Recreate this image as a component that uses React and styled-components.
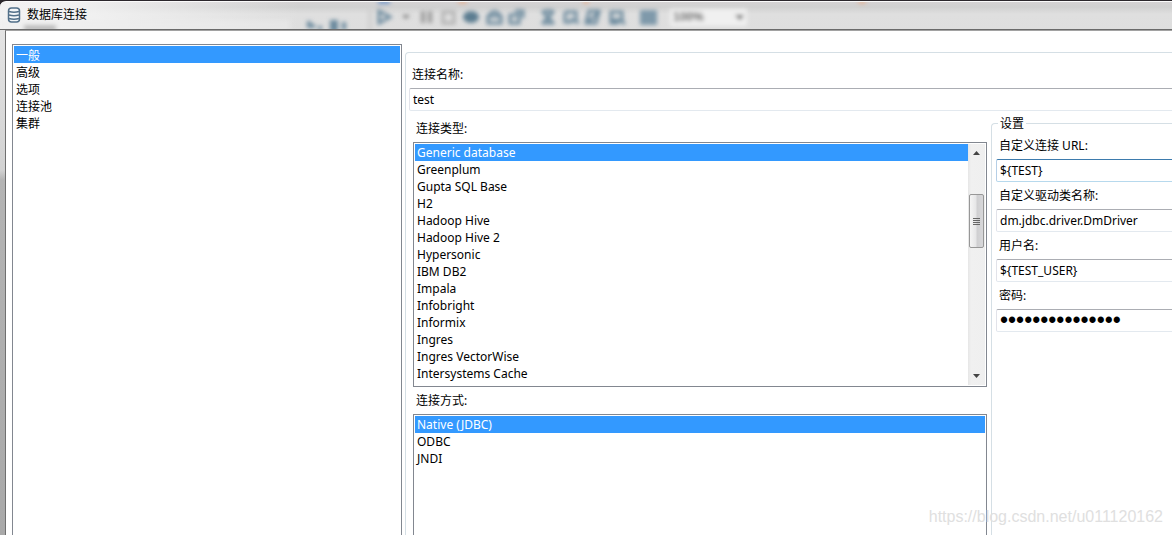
import React from "react";
import styled, { createGlobalStyle } from "styled-components";

const GlobalStyle = createGlobalStyle`
  *, *::before, *::after { box-sizing: border-box; }
  body { margin: 0; background: #fff; overflow: hidden; }
  body, select, option, input {
    font-family: "Noto Sans", "Noto Sans CJK SC", sans-serif;
    font-size: 12px;
    line-height: 17px;
    color: #000;
  }
`;

const Window = styled.div`
  display: flex;
  flex-direction: column;
  height: 100vh;
  overflow: hidden;
  position: relative;
  background: #2b272c;
`;

const TitleBar = styled.header`
  position: relative;
  flex: none;
  height: 29px;
  margin-top: 1px;
  border-top: 1px solid #fafafa;
  border-bottom: 1px solid #6a6a6a;
  border-radius: 6px 0 0 0;
  overflow: hidden;
  display: flex;
  align-items: center;
  gap: 6px;
  padding: 0 7px 2px;
  background:
    linear-gradient(90deg, rgba(245, 245, 245, 0.9) 60px, rgba(240, 240, 240, 0) 300px),
    linear-gradient(#d4d2d3, #d0d0d0 5px, #dfdfdf 12px, #dedede);
`;

const Title = styled.h1`
  position: relative;
  margin: 0;
  font-size: 12px;
  font-weight: 400;
  line-height: 17px;
`;

const DatabaseIcon = styled.svg`
  position: relative;
  flex: none;
  width: 14px;
  height: 16px;
`;

const GlassBackdrop = styled.svg`
  position: absolute;
  left: 0;
  top: 0;
  width: 900px;
  height: 28px;
`;

const Frame = styled.div`
  flex: 1;
  min-height: 0;
  display: flex;
  padding-left: 5px;
  background: linear-gradient(#e4e4e4, #d2d2d2 140px, #b4b4b4 150px, #a9a9a9);
`;

const Client = styled.main`
  flex: 1;
  min-width: 0;
  display: flex;
  gap: 3px;
  padding: 13px 0 0 6px;
  border-left: 1px solid #707070;
  border-top: 1px solid #a2a2a2;
  background: #fff;
`;

const ListFrame = styled.div`
  display: flex;
  flex: ${(p) => (p.$fixed ? "none" : "1")};
  min-height: 0;
  padding: 1px;
  border: 1px solid #828790;
  border-bottom-width: ${(p) => (p.$fixed ? "1px" : "0")};
  background: #fff;
`;

const ListBox = styled.select`
  flex: 1;
  min-width: 0;
  height: ${(p) => p.$height || "auto"};
  margin: 0;
  padding: 0;
  border: 0;
  border-radius: 0;
  outline: none;
  background: #fff;
  overflow: hidden;
  scrollbar-width: none;

  option {
    height: 17px;
    min-height: 17px;
    padding: 0 2px;
    line-height: 17px;
    color: #000;
  }
  option:checked {
    background: #3399ff linear-gradient(#3399ff, #3399ff);
    color: #fff;
    -webkit-text-fill-color: #fff;
  }
`;

const Sidebar = styled.nav`
  flex: 0 0 390px;
  display: flex;
`;

const General = styled.section`
  flex: 1;
  min-width: 0;
  display: flex;
  flex-direction: column;
  margin-top: 8px;
  padding: 13px 0 0 3px;
  border: 1px solid #d5dfe5;
  border-right: 0;
  border-bottom: 0;
  border-radius: 4px 0 0 0;
`;

const Field = styled.div`
  display: flex;
  flex-direction: column;
  gap: 5px;
`;

const Label = styled.label`
  padding-left: 3px;
  line-height: 17px;
`;

const TextInput = styled.input`
  width: 100%;
  height: 23px;
  padding: 0 3px;
  border: 1px solid;
  border-color: ${(p) =>
    p.$active ? "#3d7bad #fff #b7d9ed #b5cfe7" : "#abadb3 #fff #e3e9ef #e2e3ea"};
  border-right: 0;
  border-radius: 2px 0 0 2px;
  outline: none;
  background: #fff;

  &[type="password"] {
    font-family: "Liberation Sans", sans-serif;
    font-size: 23px;
  }
`;

const Columns = styled.div`
  flex: 1;
  min-height: 0;
  display: flex;
  gap: 4px;
  padding: 4px 0 0 4px;
`;

const Choices = styled.div`
  flex: 1;
  min-width: 0;
  display: flex;
  flex-direction: column;
  gap: 5px;
  padding-top: 5px;
`;

const Settings = styled.fieldset`
  flex: 0 0 181px;
  min-width: 0;
  margin: 0;
  padding: 5px 0 0 4px;
  border: 1px solid #d5dfe5;
  border-right: 0;
  border-bottom: 0;
  border-radius: 4px 0 0 0;
`;

const Legend = styled.legend`
  margin-left: 2px;
  padding: 0 2px;
  line-height: 17px;
`;

const FieldStack = styled.div`
  display: flex;
  flex-direction: column;
  gap: 5px;
`;

const ScrollTrack = styled.div`
  flex: 0 0 17px;
  display: flex;
  flex-direction: column;
  align-items: center;
  padding-right: 1px;
  background: linear-gradient(90deg, #e6e6e6, #f0f0f0 3px, #efefef);
`;

const ArrowButton = styled.button`
  width: 16px;
  height: 18px;
  padding: 0;
  border: 0;
  background: transparent;
  display: grid;
  place-items: center;
`;

const Thumb = styled.div`
  width: 15px;
  height: 54px;
  margin: 32px 0 auto;
  border: 1px solid #979797;
  border-radius: 2px;
  display: grid;
  place-items: center;
  background: linear-gradient(90deg, #f5f5f5, #e6e6e7 45%, #cfcfd1 55%, #d8d8da);
`;

const Watermark = styled.a`
  position: absolute;
  right: 9px;
  bottom: 8px;
  font-family: "Liberation Sans", sans-serif;
  font-size: 16px;
  line-height: 20px;
  color: #e0e0e0;
  text-decoration: none;
`;

const CATEGORIES = ["一般", "高级", "选项", "连接池", "集群"];
const DATABASES = [
  "Generic database", "Greenplum", "Gupta SQL Base", "H2", "Hadoop Hive",
  "Hadoop Hive 2", "Hypersonic", "IBM DB2", "Impala", "Infobright",
  "Informix", "Ingres", "Ingres VectorWise", "Intersystems Cache",
];
const ACCESS = ["Native (JDBC)", "ODBC", "JNDI"];
const SETTINGS = [
  { id: "url", label: "自定义连接 URL:", value: "${TEST}", active: true },
  { id: "driver", label: "自定义驱动类名称:", value: "dm.jdbc.driver.DmDriver" },
  { id: "user", label: "用户名:", value: "${TEST_USER}" },
  { id: "password", label: "密码:", value: "abcdefghijklmno", type: "password" },
];

function Options({ items }) {
  return items.map((item) => <option key={item}>{item}</option>);
}

function Backdrop() {
  return (
    <GlassBackdrop viewBox="0 0 900 28" aria-hidden="true">
      <defs>
        <filter id="glass" x="-5%" y="-50%" width="110%" height="200%">
          <feGaussianBlur stdDeviation="2" />
        </filter>
      </defs>
      <g filter="url(#glass)">
        <path d="M24 26h32" stroke="#777" strokeWidth="5" />
        <path d="M0 18H290V30H0z" fill="#eee" opacity=".5" />
        <path d="M370 5V30" stroke="#d0d0d0" strokeWidth="4" />
        <path d="M378 0h12" stroke="#5785c4" strokeWidth="3" />
        <path d="M458 0h9M583 0h6M858 0h8" stroke="#ef9f6d" strokeWidth="2" />
        <g fill="none" stroke="#6b899d" strokeWidth="3">
          <path d="M309 19v5h6M318 26h4M332 20v8h4v-8zM344 20v8" strokeWidth="4" />
          <path d="M379 9v12l11-6z" />
          <path d="M490 14c0-6 9-6 9 0M488 14h13v7h-13zM510 13h9v8h-9zM515 9h8v7" />
          <path d="M542 9l12 13M554 9l-12 13M544 9h9M544 21h8" />
          <path d="M565 10h11v8M565 10v10h7M570 17l9 4M589 9h10l-3 12h-10zM588 20l12-11" />
          <path d="M611 10h11v8h-11zM611 18v3h8M620 18l5 4" />
        </g>
        <path d="M402 13h8l-4 4z" fill="#777" />
        <path d="M421 9h4v12h-4zM428 9h4v12h-4z" fill="#999" />
        <path d="M443 10h11v11h-11z" fill="none" stroke="#b0b0b0" strokeWidth="3" />
        <ellipse cx="471" cy="15" rx="8" ry="6" fill="#5c7d91" />
        <path d="M640 8h17v15h-17z" fill="#7f99aa" />
        <path d="M670 7h77v17h-77z" fill="#f0f0f0" />
        <path d="M735 13h9l-4 5z" fill="#444" />
        <text x="673" y="19" fontFamily="Liberation Sans" fontSize="12" fontWeight="700" fill="#555">100%</text>
      </g>
    </GlassBackdrop>
  );
}

export default function App() {
  return (
    <>
      <GlobalStyle />
      <Window>
        <TitleBar>
          <Backdrop />
          <DatabaseIcon viewBox="0 0 14 16" aria-hidden="true">
            <rect x="1.500" y="1" width="11" height="14" rx="3" fill="#f3f6f8" stroke="#527089" strokeWidth="1.500" />
            <path d="M2 4.500q5 1.500 10 0M2 8q5 1.500 10 0M2 11.500q5 1.500 10 0" fill="none" stroke="#527089" strokeWidth="1.700" />
          </DatabaseIcon>
          <Title>数据库连接</Title>
        </TitleBar>
        <Frame>
          <Client>
            <Sidebar aria-label="数据库连接">
              <ListFrame>
                <ListBox size={5} defaultValue="一般" aria-label="数据库连接">
                  <Options items={CATEGORIES} />
                </ListBox>
              </ListFrame>
            </Sidebar>
            <General>
              <Field>
                <Label htmlFor="name">连接名称:</Label>
                <TextInput id="name" defaultValue="test" />
              </Field>
              <Columns>
                <Choices>
                  <Label htmlFor="type">连接类型:</Label>
                  <ListFrame $fixed>
                    <ListBox id="type" size={14} $height="241px" defaultValue="Generic database">
                      <Options items={DATABASES} />
                    </ListBox>
                    <ScrollTrack>
                      <ArrowButton type="button" aria-label="Scroll up">
                        <svg width="7" height="4" aria-hidden="true"><path d="M0 4L3.500 0 7 4z" fill="#444" /></svg>
                      </ArrowButton>
                      <Thumb>
                        <svg width="7" height="9" aria-hidden="true"><path d="M0 1.500h7M0 3.500h7M0 5.500h7M0 7.500h7" stroke="#666" /></svg>
                      </Thumb>
                      <ArrowButton type="button" aria-label="Scroll down">
                        <svg width="7" height="4" aria-hidden="true"><path d="M0 0h7L3.500 4z" fill="#444" /></svg>
                      </ArrowButton>
                    </ScrollTrack>
                  </ListFrame>
                  <Label htmlFor="access">连接方式:</Label>
                  <ListFrame>
                    <ListBox id="access" size={3} defaultValue="Native (JDBC)">
                      <Options items={ACCESS} />
                    </ListBox>
                  </ListFrame>
                </Choices>
                <Settings>
                  <Legend>设置</Legend>
                  <FieldStack>
                    {SETTINGS.map((s) => (
                      <Field key={s.id}>
                        <Label htmlFor={s.id}>{s.label}</Label>
                        <TextInput id={s.id} type={s.type || "text"} defaultValue={s.value} $active={s.active} />
                      </Field>
                    ))}
                  </FieldStack>
                </Settings>
              </Columns>
            </General>
          </Client>
        </Frame>
        <Watermark href="https://blog.csdn.net/u011120162">https://blog.csdn.net/u011120162</Watermark>
      </Window>
    </>
  );
}
